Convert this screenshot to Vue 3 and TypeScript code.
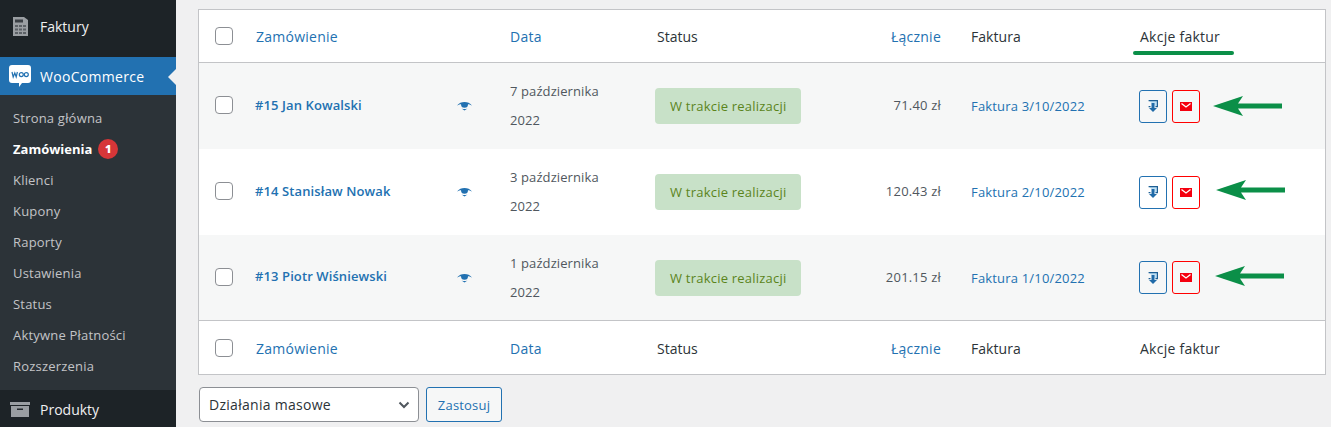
<script setup lang="ts">
interface Order {
  title: string
  day: string
  total: string
  invoice: string
  arrow: { left: number; top: number }
}

const submenu = ['Strona główna', 'Zamówienia', 'Klienci', 'Kupony', 'Raporty', 'Ustawienia', 'Status', 'Aktywne Płatności', 'Rozszerzenia']

const orders: Order[] = [
  { title: '#15 Jan Kowalski', day: '7 października', total: '71.40 zł', invoice: 'Faktura 3/10/2022', arrow: { left: 1213, top: 96 } },
  { title: '#14 Stanisław Nowak', day: '3 października', total: '120.43 zł', invoice: 'Faktura 2/10/2022', arrow: { left: 1216, top: 180 } },
  { title: '#13 Piotr Wiśniewski', day: '1 października', total: '201.15 zł', invoice: 'Faktura 1/10/2022', arrow: { left: 1215, top: 266 } },
]
</script>

<template>
  <div class="page">
    <aside class="sidebar">
      <div class="top-item faktury">
        <svg class="menu-icon" width="15" height="19" viewBox="0 0 15 19">
          <path d="M0 0h11l4 3v16H0z" fill="#9a9ea2" />
          <rect x="2" y="2.500" width="8" height="3" fill="#3a3f44" />
          <path d="M2 8h3v2H2zM6 8h3v2H6zM10 8h3v2h-3zM2 11.500h3v2H2zM6 11.500h3v2H6zM10 11.500h3v2h-3zM2 15h3v2H2zM6 15h3v2H6zM10 15h3v2h-3z" fill="#5c6166" />
        </svg>
        <span>Faktury</span>
      </div>
      <div class="top-item woo">
        <svg class="menu-icon" width="22" height="22" viewBox="0 0 22 22">
          <path d="M3 0h16a3 3 0 0 1 3 3v12a3 3 0 0 1-3 3h-6l-3 4v-4H3a3 3 0 0 1-3-3V3a3 3 0 0 1 3-3z" fill="#fff" />
          <path d="M3 7l1.200 5 1.600-4 1.400 4 1.200-5" fill="none" stroke="#2271b1" stroke-width="1.200" />
          <circle cx="12.300" cy="9.600" r="2" fill="none" stroke="#2271b1" stroke-width="1.200" />
          <circle cx="17.300" cy="9.600" r="2" fill="none" stroke="#2271b1" stroke-width="1.200" />
        </svg>
        <span class="woo-label">WooCommerce</span>
        <i class="pointer"></i>
      </div>
      <ul class="submenu">
        <li v-for="item in submenu" :key="item" :class="{ current: item === 'Zamówienia' }">
          {{ item }}<b v-if="item === 'Zamówienia'" class="count">1</b>
        </li>
      </ul>
      <div class="top-item produkty">
        <svg class="menu-icon" width="20" height="15" viewBox="0 0 20 15">
          <rect width="20" height="3" fill="#9a9ea2" />
          <path d="M1 4h18v11H1z" fill="#9a9ea2" />
          <rect x="7" y="6.500" width="6" height="1.500" fill="#23282d" />
        </svg>
        <span>Produkty</span>
      </div>
    </aside>

    <main class="content">
      <table class="orders">
        <colgroup>
          <col class="c-check" />
          <col class="c-order" />
          <col class="c-date" />
          <col class="c-status" />
          <col class="c-total" />
          <col class="c-invoice" />
          <col />
        </colgroup>
        <thead>
          <tr>
            <th class="check"><span class="checkbox"></span></th>
            <th class="link">Zamówienie</th>
            <th class="link">Data</th>
            <th class="status-head">Status</th>
            <th class="link right">Łącznie</th>
            <th class="invoice">Faktura</th>
            <th>Akcje faktur</th>
          </tr>
        </thead>
        <tbody>
          <tr v-for="order in orders" :key="order.title">
            <td class="check"><span class="checkbox row-box"></span></td>
            <td>
              <div class="order-cell">
                <a class="order-name">{{ order.title }}</a>
                <svg width="15" height="10" viewBox="0 0 15 10">
                  <path d="M0 4.500C2 2 4.500 1 7.500 1s5.500 1 7.500 3.500C13 3.500 12 3.300 11 3.200a3.500 3.500 0 1 1-7 0C3 3.300 2 3.500 0 4.500z" fill="#2271b1" />
                  <path d="M4.500 7.500c1 .4 2 .6 3 .6s2-.2 3-.6l-3 2z" fill="#2271b1" />
                </svg>
              </div>
            </td>
            <td class="date"><div>{{ order.day }}</div><div>2022</div></td>
            <td><span class="badge">W trakcie realizacji</span></td>
            <td class="right amount">{{ order.total }}</td>
            <td class="invoice"><a class="invoice-link">{{ order.invoice }}</a></td>
            <td>
              <div class="actions">
                <span class="action pdf">
                  <svg width="10" height="12" viewBox="0 0 10 12">
                    <path d="M.6.600h8.800v6H7.500M2.500 6.600H.6z" fill="#bfe0f5" stroke="#1d5f95" stroke-width="1.200" />
                    <path d="M3.500 3h3v5H9l-4 4-4-4h2.500z" fill="#1f6aa8" />
                  </svg>
                </span>
                <span class="action mail">
                  <svg width="12" height="9" viewBox="0 0 12 9">
                    <rect width="12" height="9" fill="#f4000f" />
                    <path d="M1.500 1.500L6 5l4.500-3.500" fill="none" stroke="#fff" stroke-width="1.300" />
                  </svg>
                </span>
              </div>
            </td>
          </tr>
        </tbody>
        <tfoot>
          <tr>
            <th class="check"><span class="checkbox"></span></th>
            <th class="link">Zamówienie</th>
            <th class="link">Data</th>
            <th class="status-head">Status</th>
            <th class="link right">Łącznie</th>
            <th class="invoice">Faktura</th>
            <th>Akcje faktur</th>
          </tr>
        </tfoot>
      </table>

      <div class="bulk">
        <div class="select">
          <span>Działania masowe</span>
          <svg width="12" height="8" viewBox="0 0 12 8">
            <path d="M1.500 1.500L6 6l4.500-4.500" fill="none" stroke="#50575e" stroke-width="2" />
          </svg>
        </div>
        <button class="apply" type="button">Zastosuj</button>
      </div>
    </main>

    <i class="underline"></i>
    <svg
      v-for="order in orders"
      :key="order.invoice"
      class="arrow"
      :style="{ left: order.arrow.left + 'px', top: order.arrow.top + 'px' }"
      width="69"
      height="20"
      viewBox="0 0 69 20"
    >
      <path d="M0 10L30 0l-5 7.500h44v5H25L30 20z" fill="#0b8f48" />
    </svg>
  </div>
</template>

<style>
html, body { margin: 0; background: #f0f0f1; }
</style>

<style scoped>
.page {
  position: relative;
  display: flex;
  width: 1331px;
  height: 427px;
  overflow: hidden;
  background: #f0f0f1;
  font-family: "Open Sans", "Noto Sans", sans-serif;
  font-size: 13px;
  color: #3c434a;
}
.sidebar {
  flex: 0 0 176px;
  height: 427px;
  overflow: hidden;
  background: #1d2327;
  color: #f0f0f1;
}
.top-item {
  display: flex;
  align-items: center;
  position: relative;
  font-size: 14px;
}
.top-item span { margin-left: 40px; }
.menu-icon { position: absolute; }
.woo-label { letter-spacing: .3px; }
.faktury { height: 57px; padding-bottom: 4px; box-sizing: border-box; }
.faktury .menu-icon { left: 13px; top: 17px; }
.woo { height: 38px; background: #2271b1; color: #fff; }
.woo .menu-icon { left: 9px; top: 8px; }
.pointer {
  position: absolute;
  right: 0;
  top: 12px;
  border: 8px solid transparent;
  border-right-color: #f0f0f1;
  border-left: 0;
}
.produkty { height: 39px; }
.produkty .menu-icon { left: 10px; top: 12px; }
.submenu {
  margin: 0;
  padding: 7px 0 9px;
  list-style: none;
  background: #2c3338;
  color: #c3c4c7;
  letter-spacing: .2px;
}
.submenu li {
  display: flex;
  align-items: center;
  height: 31px;
  padding-left: 13px;
}
.submenu .current { color: #fff; font-weight: 700; letter-spacing: 0; }
.count {
  display: flex;
  align-items: center;
  justify-content: center;
  width: 20px;
  height: 20px;
  margin-left: 6px;
  border-radius: 50%;
  background: #d63638;
  font-size: 11px;
  color: #fff;
}
.content { flex: 1; padding: 9px 5px 0 22px; min-width: 0; }
.orders {
  width: 100%;
  border: 1px solid #c3c4c7;
  border-collapse: separate;
  border-spacing: 0;
  table-layout: fixed;
  background: #fff;
}
.c-check { width: 47px; }
.c-order { width: 254px; }
.c-date { width: 145px; }
.c-status { width: 215px; }
.c-total { width: 91px; }
.c-invoice { width: 179px; }
th, td { padding: 0 10px; text-align: left; font-weight: 400; }
th { letter-spacing: .25px; }
thead th { height: 52px; border-bottom: 1px solid #c3c4c7; font-size: 14px; color: #2c3338; }
tfoot th { box-sizing: border-box; height: 54px; padding-top: 2px; border-top: 1px solid #c3c4c7; font-size: 14px; color: #2c3338; }
th.link { color: #2271b1; }
th.status-head { padding-left: 12px; letter-spacing: 0; }
th.invoice { letter-spacing: .05px; }
.right { text-align: right; }
.invoice { padding-left: 20px; }
tbody td { box-sizing: border-box; height: 86px; }
tbody tr:last-child td { height: 85px; }
tbody tr:nth-child(odd) td { background: #f6f7f7; }
.check { padding: 0 0 0 16px; }
.checkbox {
  display: block;
  width: 16px;
  height: 16px;
  border: 1px solid #8c8f94;
  border-radius: 4px;
  background: #fff;
}
.row-box { margin-bottom: 2px; }
.order-cell {
  display: flex;
  align-items: center;
  justify-content: space-between;
  padding-right: 18px;
}
.order-name {
  margin: 0 0 3px -1px;
  font-weight: 600;
  letter-spacing: .1px;
  color: #2271b1;
}
.date { line-height: 29px; letter-spacing: .1px; color: #50575e; }
.badge {
  display: inline-block;
  padding: 0 15px;
  height: 36px;
  line-height: 36px;
  border-radius: 4px;
  background: #c8e1c8;
  letter-spacing: .22px;
  color: #5b841b;
}
.amount { padding-bottom: 2px; letter-spacing: .2px; color: #50575e; }
.invoice-link { letter-spacing: .18px; color: #2271b1; }
.actions { display: flex; gap: 5px; margin-left: -1px; }
.action {
  display: flex;
  align-items: center;
  justify-content: center;
  box-sizing: border-box;
  width: 28px;
  height: 33px;
  border: 1px solid #2271b1;
  border-radius: 3px;
}
.mail { border-color: #f00; }
.bulk { display: flex; gap: 7px; margin-top: 12px; margin-left: 1px; }
.select {
  display: flex;
  align-items: center;
  justify-content: space-between;
  box-sizing: border-box;
  width: 220px;
  height: 35px;
  padding: 0 8px 0 9px;
  border: 1px solid #8c8f94;
  border-radius: 4px;
  background: #fff;
  font-size: 14px;
  letter-spacing: .28px;
  color: #2c3338;
}
.apply {
  width: 76px;
  height: 35px;
  padding: 0;
  border: 1px solid #2271b1;
  border-radius: 3px;
  background: #f6f7f7;
  font: inherit;
  letter-spacing: .2px;
  color: #2271b1;
}
.underline {
  position: absolute;
  left: 1133px;
  top: 51px;
  width: 101px;
  height: 4px;
  border-radius: 2px;
  background: #0b8f48;
}
.arrow { position: absolute; }
</style>
